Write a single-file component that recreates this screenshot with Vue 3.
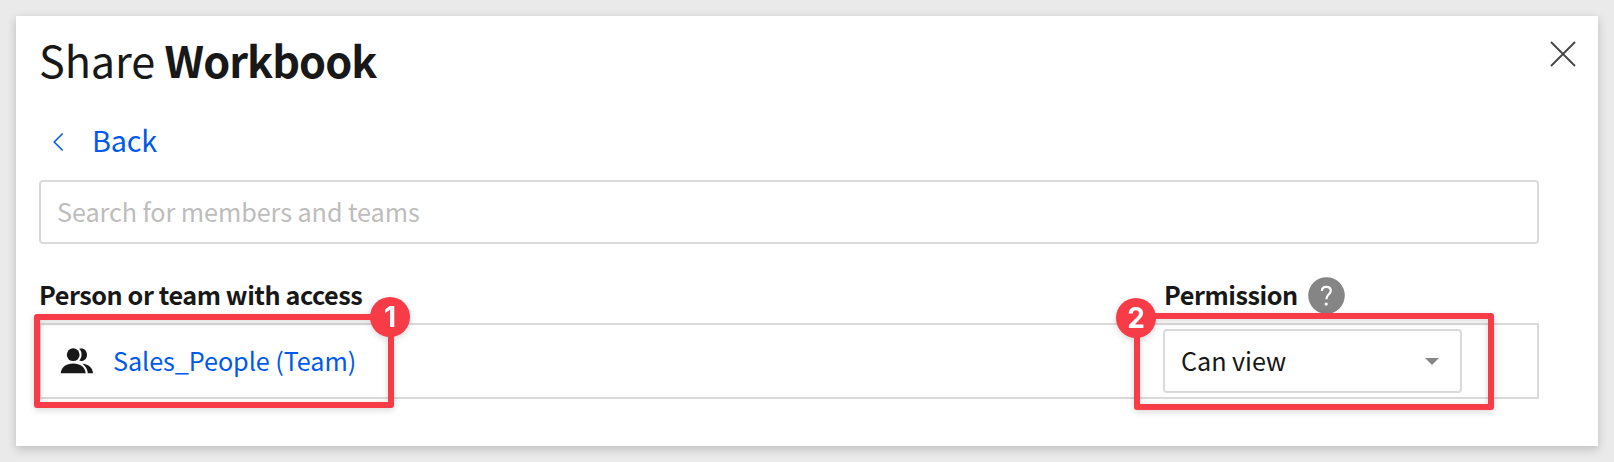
<script setup>
const member = 'Sales_People (Team)'
const permission = 'Can view'
</script>

<template>
  <main class="page">
    <section class="dialog">
      <header class="head">
        <h1 class="title"><span class="share">Share</span> <strong>Workbook</strong></h1>
        <svg class="close" width="26" height="26" viewBox="0 0 26 26"><path d="M1 1L25 25M25 1L1 25" /></svg>
      </header>
      <a class="back">
        <svg width="11" height="20" viewBox="0 0 11 20"><path d="M9.7 1.5L1.2 10L9.7 18.5" /></svg>
        <span>Back</span>
      </a>
      <div class="search"><span>Search for members and teams</span></div>
      <div class="labels">
        <span class="who">Person or team with access</span>
        <span class="perm">Permission</span>
        <svg class="help" width="37" height="37" viewBox="0 0 37 37">
          <circle cx="18.5" cy="18.5" r="18.3" />
          <path d="M13.9 14.1C13.9 11.4 15.7 9.8 18.3 9.8C21 9.8 22.8 11.4 22.8 13.8C22.8 17.1 18.3 17.7 18.3 22.3" />
          <circle class="dot" cx="18.2" cy="27.1" r="1.65" />
        </svg>
      </div>
      <div class="row">
        <svg class="people" width="34" height="28" viewBox="0 0 34 28">
          <circle cx="13.2" cy="7.7" r="6.4" />
          <path d="M.7 26.3C1.1 19.9 6.2 16.4 13.2 16.4C20.2 16.4 25.3 19.9 25.7 26.3Z" />
          <path d="M19.2 1.8C23.4.3 27 3.4 27 7.7C27 12 23.4 15.1 19.2 13.6C22.4 10.1 22.4 5.3 19.2 1.8Z" />
          <path d="M22.5 16.7C28.8 17.3 32.6 20.8 33.1 26.3H27.8C27.5 22.2 25.7 19 22.5 16.7Z" />
        </svg>
        <a class="member">{{ member }}</a>
        <div class="select">
          <span>{{ permission }}</span>
          <svg width="14" height="7" viewBox="0 0 14 7"><path d="M0 0H14L7 7Z" /></svg>
        </div>
      </div>
    </section>
    <div class="callout first"><b class="badge">1</b></div>
    <div class="callout second"><b class="badge">2</b></div>
  </main>
</template>

<style>
html, body { margin: 0; overflow: hidden; }
</style>

<style scoped>
.page {
  position: relative;
  box-sizing: border-box;
  width: 1614px;
  height: 462px;
  padding: 16px;
  background: #eaeaea;
  color: #181818;
  font-family: "Noto Sans CJK SC", "Noto Sans", sans-serif;
  font-size: 25.2px;
}
.dialog {
  box-sizing: border-box;
  width: 1582px;
  height: 430px;
  padding: 13px 59px 0 23px;
  background: #fff;
  box-shadow: 0 3px 9px rgba(0, 0, 0, .2);
}
.head { display: flex; justify-content: space-between; height: 60px; margin-right: -37px; }
.title { margin: 0; font-size: 43.2px; font-weight: 400; line-height: 60px; letter-spacing: -.1px; white-space: nowrap; }
.title strong { font-weight: 700; letter-spacing: -.95px; }
.close { margin-top: 12px; }
.close path { fill: none; stroke: #444; stroke-width: 1.8; }
.back { display: flex; align-items: center; height: 44px; margin: 31px 0 16px 14px; color: #0059eb; font-size: 28.8px; line-height: 42px; letter-spacing: -.15px; }
.back span { margin: -5px 0 0 28px; }
.back path { fill: none; stroke: #0059eb; stroke-width: 1.6; }
.search { box-sizing: border-box; width: 1500px; height: 64px; padding-left: 16px; border: 2px solid #dadada; border-radius: 4px; color: #bdbdbd; line-height: 58px; letter-spacing: -.07px; }
.labels { display: flex; align-items: center; height: 37px; margin: 32px 0 10px; font-weight: 700; line-height: 37px; letter-spacing: -.44px; white-space: nowrap; }
.who { width: 1125px; }
.perm { width: 143.5px; }
.help { margin-top: 1px; }
.help circle { fill: #858585; }
.help path { fill: none; stroke: #fff; stroke-width: 2.2; }
.help .dot { fill: #fff; }
.row { display: flex; align-items: center; box-sizing: border-box; width: 1500px; height: 76px; border: 2px solid #dadada; }
.people { margin-left: 19px; fill: #181818; }
.member { width: 1050px; margin: -2px 0 0 19px; color: #0059eb; letter-spacing: -.06px; }
.select { display: flex; align-items: center; justify-content: space-between; box-sizing: border-box; width: 299px; height: 64px; padding: 0 21px 0 16px; border: 2px solid #dadada; border-radius: 4px; }
.select span { margin-top: -2px; letter-spacing: -.06px; }
.select path { fill: #858585; }
.callout { position: absolute; box-sizing: border-box; border: 6px solid #f73c48; border-radius: 3px; filter: drop-shadow(0 2px 3px rgba(0, 0, 0, .16)); }
.first { top: 314px; left: 34px; width: 360px; height: 94px; }
.second { top: 313px; left: 1134px; width: 360px; height: 97px; }
.badge { position: absolute; width: 40px; height: 40px; border-radius: 50%; background: #f73c48; color: #fff; font: 700 28px/40px Inter, sans-serif; text-align: center; }
.first .badge { top: -23px; right: -22px; }
.second .badge { top: -21.5px; left: -24px; }
</style>
